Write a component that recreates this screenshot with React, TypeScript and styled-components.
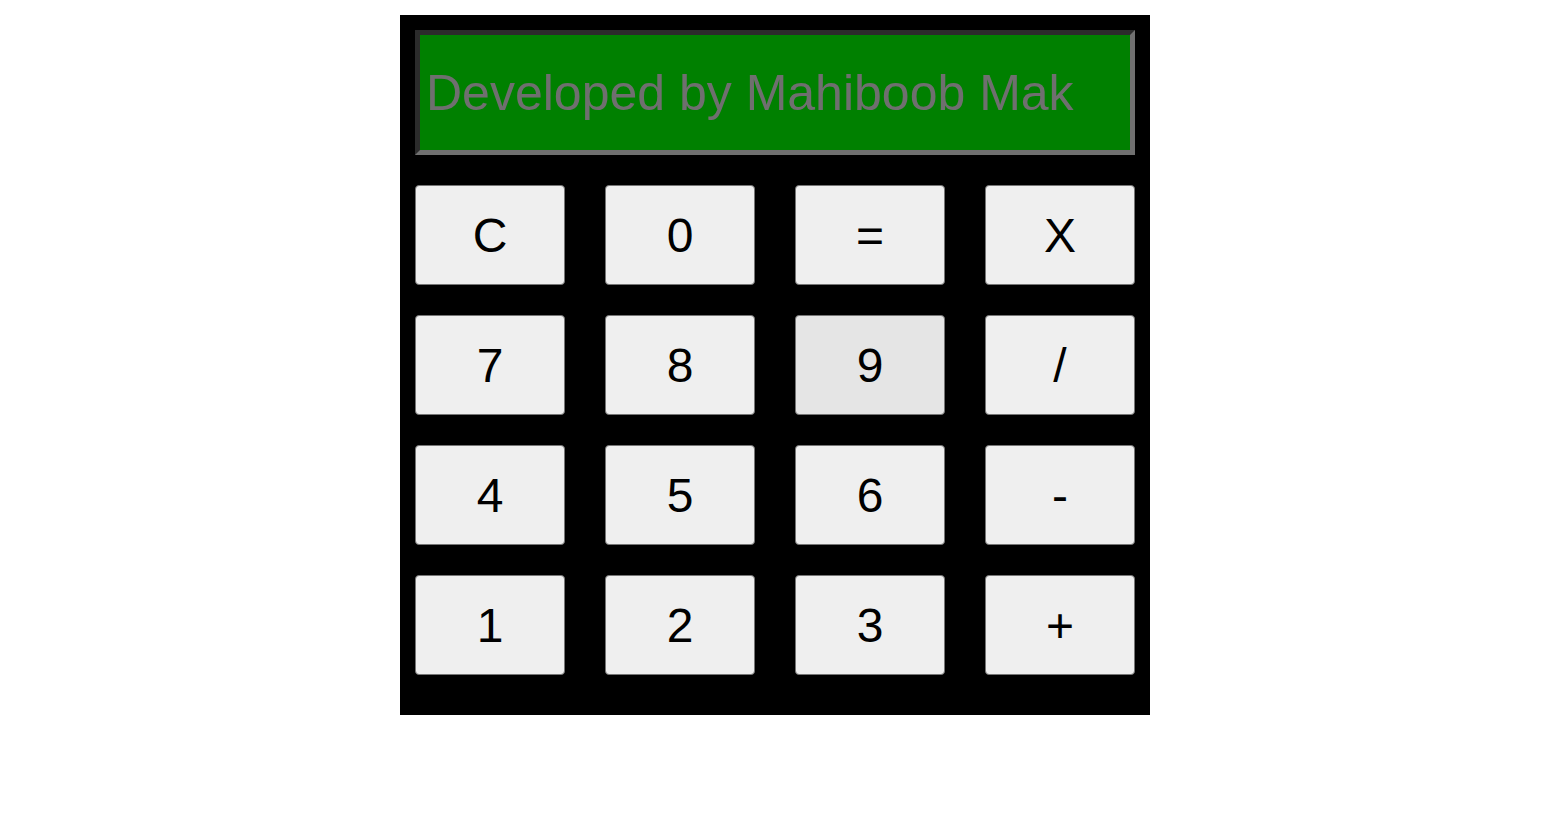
import React, { useState } from 'react';
import styled, { createGlobalStyle } from 'styled-components';

const GlobalStyle = createGlobalStyle`
  body {
    margin: 0;
    background: #ffffff;
    font-family: "Liberation Sans", Arial, sans-serif;
  }
`;

const Calculator = styled.div`
  width: 720px;
  margin: 15px 0 0 400px;
  padding: 15px 15px 40px;
  background: #000000;
  display: flex;
  flex-direction: column;
  gap: 30px;
`;

const Display = styled.input`
  box-sizing: border-box;
  width: 720px;
  height: 125px;
  margin: 0;
  padding: 0 6px;
  background: #008000;
  border-width: 5px;
  border-style: solid;
  border-color: #2b2b2b #707070 #707070 #2b2b2b;
  font-family: "Liberation Sans", Arial, sans-serif;
  font-size: 50px;
  color: #000000;
  outline: none;

  &::placeholder {
    color: #6f6f6f;
  }
`;

const Keypad = styled.div`
  display: grid;
  grid-template-columns: repeat(4, 150px);
  grid-auto-rows: 100px;
  column-gap: 40px;
  row-gap: 30px;
`;

const Key = styled.button<{ $hover?: boolean }>`
  box-sizing: border-box;
  margin: 0;
  padding: 0;
  border: 1px solid #767676;
  border-radius: 4px;
  background: ${(p) => (p.$hover ? '#e5e5e5' : '#efefef')};
  font-family: "Liberation Sans", Arial, sans-serif;
  font-size: 48px;
  color: #000000;
  cursor: pointer;

  &:hover {
    background: #e5e5e5;
  }
`;

const keys = ['C', '0', '=', 'X', '7', '8', '9', '/', '4', '5', '6', '-', '1', '2', '3', '+'];

export default function App() {
  const [value, setValue] = useState('');

  return (
    <>
      <GlobalStyle />
      <Calculator>
        <Display
          value={value}
          placeholder="Developed by Mahiboob Mak"
          onChange={(e) => setValue(e.target.value)}
        />
        <Keypad>
          {keys.map((k) => (
            <Key key={k} $hover={k === '9'}>
              {k}
            </Key>
          ))}
        </Keypad>
      </Calculator>
    </>
  );
}
